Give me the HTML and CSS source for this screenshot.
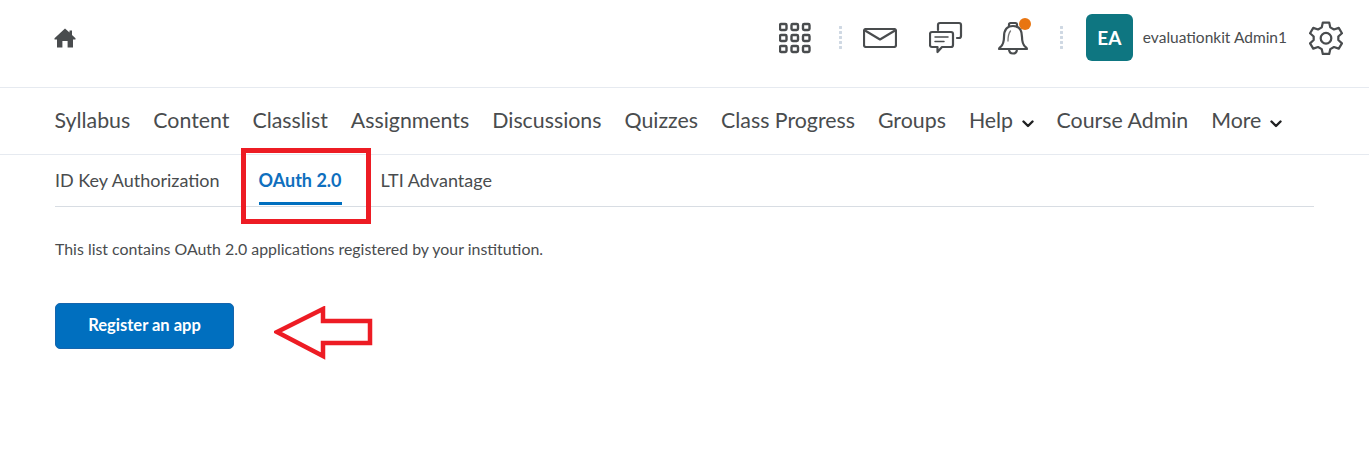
FILE: index.html
```html
<!DOCTYPE html>
<html lang="en">
<head>
<meta charset="utf-8">
<title>OAuth 2.0</title>
<link rel="stylesheet" href="styles.css">
</head>
<body>
<header class="topbar">
  <svg class="home" viewBox="0 0 22 20" width="22" height="20"><path d="M11 .5 L15.5 4.6 V2.5 H18 V6.9 L21.5 10.2 V11.5 H19 V19.5 H13.6 V13 H8.4 V19.5 H3 V11.5 H.5 V10.2 Z" fill="#494c4e"/></svg>
  <div class="tools">
    <svg class="ico-grid" viewBox="0 0 32 32" width="32" height="32" fill="none" stroke="#494c4e" stroke-width="2.4"><rect x="1" y="2" width="6.5" height="6" rx="1.2"/><rect x="12.5" y="2" width="6.5" height="6" rx="1.2"/><rect x="24" y="2" width="6.5" height="6" rx="1.2"/><rect x="1" y="13" width="6.5" height="6" rx="1.2"/><rect x="12.5" y="13" width="6.5" height="6" rx="1.2"/><rect x="24" y="13" width="6.5" height="6" rx="1.2"/><rect x="1" y="24" width="6.5" height="6" rx="1.2"/><rect x="12.5" y="24" width="6.5" height="6" rx="1.2"/><rect x="24" y="24" width="6.5" height="6" rx="1.2"/></svg>
    <span class="dots first"></span>
    <svg class="ico-mail" viewBox="0 0 34 20" width="34" height="20" fill="none" stroke="#494c4e" stroke-width="2.2" stroke-linejoin="round"><rect x="1" y="1" width="32" height="18" rx="2"/><path d="M2 2.5 L17 11.5 L32 2.5"/></svg>
    <svg class="ico-chat" viewBox="0 0 34 34" width="34" height="34" fill="none" stroke="#494c4e" stroke-width="2.2" stroke-linejoin="round" stroke-linecap="round"><path d="M9 9 V4 Q9 2 11 2 H30 Q32 2 32 4 V15 Q32 17 30 17 H28"/><path d="M3 11 H22 Q24 11 24 13 V24 Q24 26 22 26 H13 L8.500 31 V26 H3 Q1 26 1 24 V13 Q1 11 3 11 Z"/><path d="M6 16 H19 M6 20.500 H15" stroke-width="1.500"/></svg>
    <span class="bell">
      <svg viewBox="0 0 32 34" width="32" height="34" fill="none" stroke="#494c4e" stroke-width="2.2" stroke-linejoin="round" stroke-linecap="round"><path d="M12 5.500 V3.500 Q12 2 13.500 2 H18.500 Q20 2 20 3.500 V5.500"/><path d="M2 28 Q2 27 3.500 26 Q7 23 7 16 Q7 5 16 5 Q25 5 25 16 Q25 23 28.500 26 Q30 27 30 28 Z"/><path d="M12 28 Q12 32.500 16 32.500 Q20 32.500 20 28"/><path d="M11 20 Q11 13 13.500 10" stroke-width="1.300" stroke="#777"/></svg>
      <span class="badge"></span>
    </span>
    <span class="dots second"></span>
    <span class="avatar">EA</span>
    <span class="username">evaluationkit Admin1</span>
    <svg class="ico-gear" viewBox="1 1 32 32" width="34" height="34" fill="none" stroke="#494c4e" stroke-width="2.1" stroke-linejoin="round"><path d="M14 2.500 H20 L21 7 L24.500 9 L29 7.500 L32 12.500 L28.600 15.600 V18.900 L32 22 L29 27 L24.500 25.500 L21 27.500 L20 32 H14 L13 27.500 L9.500 25.500 L5 27 L2 22 L5.400 18.900 V15.600 L2 12.500 L5 7.500 L9.500 9 L13 7 Z"/><circle cx="17" cy="17.200" r="5"/></svg>
  </div>
</header>
<nav class="mainnav">
  <a>Syllabus</a><a>Content</a><a>Classlist</a><a>Assignments</a><a>Discussions</a><a>Quizzes</a><a>Class Progress</a><a>Groups</a>
  <a class="menu">Help <svg viewBox="0 0 12 8" width="12" height="8" fill="none" stroke="#202122" stroke-width="2.400" stroke-linecap="round" stroke-linejoin="round"><path d="M1.500 1.500 L6 6 L10.500 1.500"/></svg></a>
  <a>Course Admin</a>
  <a class="menu">More <svg viewBox="0 0 12 8" width="12" height="8" fill="none" stroke="#202122" stroke-width="2.400" stroke-linecap="round" stroke-linejoin="round"><path d="M1.500 1.500 L6 6 L10.500 1.500"/></svg></a>
</nav>
<main class="content">
  <div class="tabs">
    <a class="tab">ID Key Authorization</a>
    <a class="tab active">OAuth 2.0</a>
    <a class="tab">LTI Advantage</a>
  </div>
  <p class="intro">This list contains OAuth 2.0 applications registered by your institution.</p>
  <button class="primary">Register an app</button>
</main>
<div class="callout-box"></div>
<svg class="callout-arrow" viewBox="0 0 100 54" width="100" height="54"><path d="M3 26 L49 3 V15 H96 V37 H49 V50 Z" fill="#fff" stroke="#ed1c24" stroke-width="4.500"/></svg>
</body>
</html>
```
FILE: styles.css
```css
* { box-sizing: border-box; }
html, body { margin: 0; height: 100%; }
body {
  position: relative;
  background: #fff;
  font-family: Lato, "Open Sans", sans-serif;
  color: #494c4e;
  overflow: hidden;
}
.topbar {
  height: 88px;
  border-bottom: 1px solid #e6eaf0;
  display: flex;
  align-items: center;
  justify-content: space-between;
  padding: 0 26px 0 54px;
}
.home { margin-top: -11px; }
.tools { display: flex; align-items: center; margin-top: -12px; }
.ico-grid { margin-right: 28px; }
.dots {
  width: 3px;
  height: 26px;
  background: radial-gradient(circle at center, #cfd8e3 1.4px, transparent 1.6px) 0 0 / 3px 5px repeat-y;
}
.dots.first { margin-right: 21px; }
.ico-mail { margin-right: 32px; }
.ico-chat { margin-right: 34px; }
.bell { position: relative; display: block; height: 34px; margin-right: 31px; }
.bell svg { display: block; }
.badge {
  position: absolute;
  top: -3px;
  left: 22px;
  width: 12px;
  height: 12px;
  border-radius: 50%;
  background: #e87511;
}
.dots.second { margin-right: 23px; }
.avatar {
  width: 47px;
  height: 47px;
  border-radius: 6px;
  background: #0e7681;
  color: #fff;
  font-size: 19px;
  font-weight: 700;
  display: flex;
  align-items: center;
  justify-content: center;
  margin-right: 10px;
}
.username { font-size: 15.5px; margin-right: 22px; padding-bottom: 2px; }
.mainnav {
  height: 67px;
  border-bottom: 1px solid #e6eaf0;
  display: flex;
  align-items: center;
  gap: 23px;
  padding: 0 0 2px 54.5px;
  font-size: 21.34px;
  color: #494c4e;
}
.mainnav a { white-space: nowrap; }
.menu svg { margin-left: 3px; vertical-align: 0; }
.content { padding: 0 55px; }
.tabs {
  height: 52px;
  display: flex;
  gap: 39px;
  border-bottom: 1px solid #d8dde3;
  font-size: 18px;
}
.tab { padding: 14px 0 0; white-space: nowrap; }
.tab.active {
  color: #0f6fbe;
  font-weight: 700;
  border-bottom: 3px solid #006fbf;
  height: 50px;
}
.intro {
  margin: 33px 0 0;
  font-size: 15.9px;
  line-height: 18px;
}
.primary {
  display: block;
  margin-top: 45px;
  width: 179px;
  height: 46px;
  border: 1px solid #1565ad;
  border-radius: 5px;
  background: #006fbf;
  color: #fff;
  font-family: inherit;
  font-size: 16.500px;
  font-weight: 700;
  padding: 0 0 3px;
}
.callout-box {
  position: absolute;
  left: 241px;
  top: 148px;
  width: 130px;
  height: 76px;
  border: 5px solid #ed1c24;
}
.callout-arrow { position: absolute; left: 274px; top: 306px; }
```
